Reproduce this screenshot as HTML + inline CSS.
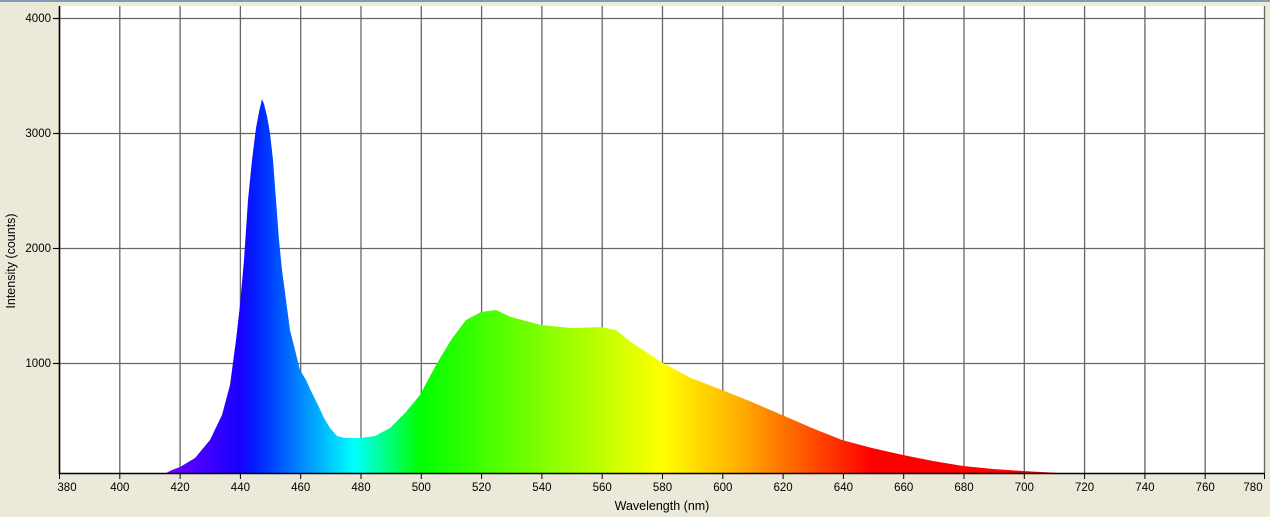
<!DOCTYPE html>
<html><head><style>
html,body{margin:0;padding:0;background:#ece9d8;}
svg{display:block;font-family:"Liberation Sans",sans-serif;}
</style></head><body>
<svg width="1270" height="517" viewBox="0 0 1270 517">
<rect x="0" y="0" width="1270" height="517" fill="#ece9d8"/>
<rect x="0" y="0" width="1270" height="2" fill="#7f9db9"/>
<rect x="59" y="6" width="1206" height="467" fill="#fff"/>
<g stroke="#666" stroke-width="1.3">
<line x1="119.8" y1="6" x2="119.8" y2="473"/><line x1="180.1" y1="6" x2="180.1" y2="473"/><line x1="240.4" y1="6" x2="240.4" y2="473"/><line x1="300.7" y1="6" x2="300.7" y2="473"/><line x1="361" y1="6" x2="361" y2="473"/><line x1="421.3" y1="6" x2="421.3" y2="473"/><line x1="481.6" y1="6" x2="481.6" y2="473"/><line x1="541.9" y1="6" x2="541.9" y2="473"/><line x1="602.2" y1="6" x2="602.2" y2="473"/><line x1="662.5" y1="6" x2="662.5" y2="473"/><line x1="722.8" y1="6" x2="722.8" y2="473"/><line x1="783.1" y1="6" x2="783.1" y2="473"/><line x1="843.4" y1="6" x2="843.4" y2="473"/><line x1="903.7" y1="6" x2="903.7" y2="473"/><line x1="964" y1="6" x2="964" y2="473"/><line x1="1024.3" y1="6" x2="1024.3" y2="473"/><line x1="1084.6" y1="6" x2="1084.6" y2="473"/><line x1="1144.9" y1="6" x2="1144.9" y2="473"/><line x1="1205.2" y1="6" x2="1205.2" y2="473"/><line x1="1264.5" y1="6" x2="1264.5" y2="473"/>
<line x1="53" y1="18.5" x2="1265" y2="18.5"/><line x1="53" y1="133.5" x2="1265" y2="133.5"/><line x1="53" y1="248.5" x2="1265" y2="248.5"/><line x1="53" y1="363.5" x2="1265" y2="363.5"/>
</g>
<defs>
<linearGradient id="sp" gradientUnits="userSpaceOnUse" x1="166" y1="0" x2="1060" y2="0">
<stop offset="0" stop-color="#7000ff"/>
<stop offset="0.083" stop-color="#1800ff"/>
<stop offset="0.105" stop-color="#0028ff"/>
<stop offset="0.155" stop-color="#0090ff"/>
<stop offset="0.21" stop-color="#00ffff"/>
<stop offset="0.285" stop-color="#00ff00"/>
<stop offset="0.42" stop-color="#80ff00"/>
<stop offset="0.555" stop-color="#ffff00"/>
<stop offset="0.64" stop-color="#ffb000"/>
<stop offset="0.72" stop-color="#ff5000"/>
<stop offset="0.79" stop-color="#ff0000"/>
<stop offset="1" stop-color="#ff0000"/>
</linearGradient>
</defs>
<path fill="url(#sp)" d="M166,473 L172,470 L180,467 L195,458 L210,440 L222,415 L230,385 L236,340 L240,305 L244,260 L248,200 L252,160 L256,128 L259,112 L262,99 L264,104 L267,116 L270,133 L273,160 L276,200 L279,240 L282,270 L286,300 L290,330 L295,350 L300,370 L306,380 L312,393 L318,405 L324,418 L330,428 L337,436 L345,438 L360,438 L375,436 L390,428 L405,413 L420,395 L436,365 L451,340 L466,320 L481,312 L496,310 L511,317 L541,325 L571,328 L601,327 L616,330 L631,342 L661,362 L691,378 L722,390 L752,402 L782,415 L812,428 L842,440 L872,448 L903,455 L933,461 L963,466 L993,469 L1023,471 L1059,473 Z"/>
<g stroke="#000" stroke-width="1.6">
<line x1="59.5" y1="6" x2="59.5" y2="474"/>
<line x1="59" y1="473.5" x2="1265" y2="473.5"/>
</g>
<g stroke="#000" stroke-width="1">
<line x1="53" y1="18.5" x2="59" y2="18.5"/><line x1="53" y1="133.5" x2="59" y2="133.5"/><line x1="53" y1="248.5" x2="59" y2="248.5"/><line x1="53" y1="363.5" x2="59" y2="363.5"/>
<line x1="59.5" y1="473" x2="59.5" y2="479"/><line x1="119.8" y1="473" x2="119.8" y2="479"/><line x1="180.1" y1="473" x2="180.1" y2="479"/><line x1="240.4" y1="473" x2="240.4" y2="479"/><line x1="300.7" y1="473" x2="300.7" y2="479"/><line x1="361" y1="473" x2="361" y2="479"/><line x1="421.3" y1="473" x2="421.3" y2="479"/><line x1="481.6" y1="473" x2="481.6" y2="479"/><line x1="541.9" y1="473" x2="541.9" y2="479"/><line x1="602.2" y1="473" x2="602.2" y2="479"/><line x1="662.5" y1="473" x2="662.5" y2="479"/><line x1="722.8" y1="473" x2="722.8" y2="479"/><line x1="783.1" y1="473" x2="783.1" y2="479"/><line x1="843.4" y1="473" x2="843.4" y2="479"/><line x1="903.7" y1="473" x2="903.7" y2="479"/><line x1="964" y1="473" x2="964" y2="479"/><line x1="1024.3" y1="473" x2="1024.3" y2="479"/><line x1="1084.6" y1="473" x2="1084.6" y2="479"/><line x1="1144.9" y1="473" x2="1144.9" y2="479"/><line x1="1205.2" y1="473" x2="1205.2" y2="479"/><line x1="1264.5" y1="473" x2="1264.5" y2="479"/>
</g>
<g font-size="11.5" fill="#000" text-anchor="end">
<text x="51" y="22">4000</text><text x="51" y="137">3000</text><text x="51" y="252">2000</text><text x="51" y="367">1000</text>
</g>
<g font-size="11.5" fill="#000" text-anchor="middle">
<text x="67" y="491">380</text><text x="119.8" y="491">400</text><text x="180.1" y="491">420</text><text x="240.4" y="491">440</text><text x="300.7" y="491">460</text><text x="361" y="491">480</text><text x="421.3" y="491">500</text><text x="481.6" y="491">520</text><text x="541.9" y="491">540</text><text x="602.2" y="491">560</text><text x="662.5" y="491">580</text><text x="722.8" y="491">600</text><text x="783.1" y="491">620</text><text x="843.4" y="491">640</text><text x="903.7" y="491">660</text><text x="964" y="491">680</text><text x="1024.3" y="491">700</text><text x="1084.6" y="491">720</text><text x="1144.9" y="491">740</text><text x="1205.2" y="491">760</text><text x="1253" y="491">780</text>
</g>
<g font-size="12.5" fill="#000" text-anchor="middle">
<text x="662" y="510">Wavelength (nm)</text>
<text transform="translate(15,261) rotate(-90)">Intensity (counts)</text>
</g>
</svg>
</body></html>
